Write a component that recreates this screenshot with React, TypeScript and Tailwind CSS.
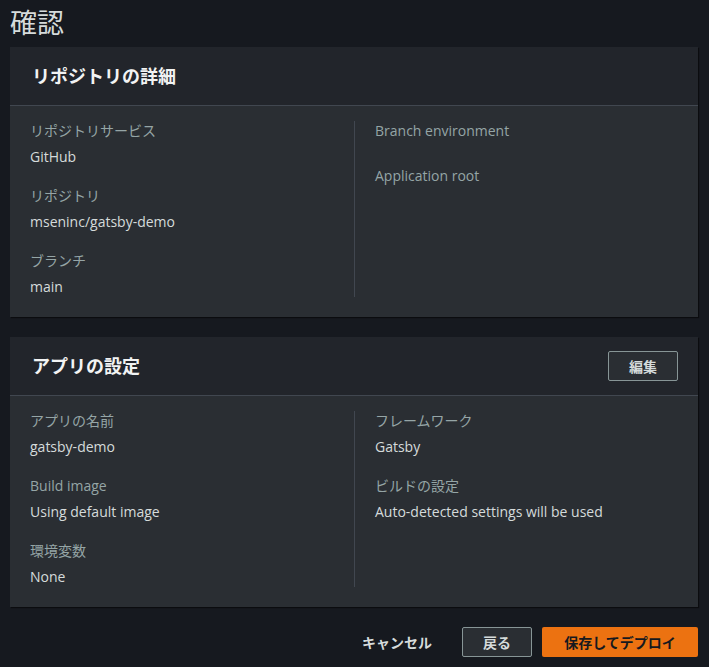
import React from "react";

const font = { fontFamily: '"Open Sans", "Noto Sans CJK JP", sans-serif' };

function Field({ label, value }: { label: string; value?: string }) {
  return (
    <div className="flex flex-col">
      <div className="text-[14px] leading-[20px] text-[#95a5a6]">{label}</div>
      <div className="mt-[6px] h-[20px] text-[14px] leading-[20px] text-[#d5dbdb]">{value ?? ""}</div>
    </div>
  );
}

function Card({
  title,
  action,
  left,
  right,
}: {
  title: string;
  action?: React.ReactNode;
  left: React.ReactNode;
  right: React.ReactNode;
}) {
  return (
    <div className="bg-[#2a2e33] shadow-[1px_1px_1px_rgba(0,0,0,0.5)]">
      <div className="flex h-[59px] items-center justify-between border-b border-[#414750] bg-[#22252b] pl-[22px] pr-[20px]">
        <div className="text-[18px] font-bold text-[#f2f3f3]">{title}</div>
        {action}
      </div>
      <div className="flex px-[20px] pb-[20px] pt-[15px]">
        <div className="flex w-[325px] shrink-0 flex-col gap-[19px] border-r border-[#414750]">{left}</div>
        <div className="flex flex-1 flex-col gap-[19px] pl-[20px]">{right}</div>
      </div>
    </div>
  );
}

export default function App() {
  return (
    <div className="min-h-[667px] w-[709px] bg-[#16191f] pl-[10px] pr-[11px]" style={font}>
      <div className="flex h-[45px] items-center text-[27px] leading-none text-[#d5dbdb]">確認</div>
      <div className="h-[2px]" />
      <Card
        title="リポジトリの詳細"
        left={
          <>
            <Field label="リポジトリサービス" value="GitHub" />
            <Field label="リポジトリ" value="mseninc/gatsby-demo" />
            <Field label="ブランチ" value="main" />
          </>
        }
        right={
          <>
            <div className="text-[14px] leading-[20px] text-[#95a5a6]">Branch environment</div>
            <div className="mt-[6px] text-[14px] leading-[20px] text-[#95a5a6]">Application root</div>
          </>
        }
      />
      <div className="h-[20px]" />
      <Card
        title="アプリの設定"
        action={
          <button className="h-[30px] w-[70px] rounded-[2px] border border-[#879596] bg-[#2a2e33] text-[14px] font-bold text-[#d5dbdb]">
            編集
          </button>
        }
        left={
          <>
            <Field label="アプリの名前" value="gatsby-demo" />
            <Field label="Build image" value="Using default image" />
            <Field label="環境変数" value="None" />
          </>
        }
        right={
          <>
            <Field label="フレームワーク" value="Gatsby" />
            <Field label="ビルドの設定" value="Auto-detected settings will be used" />
          </>
        }
      />
      <div className="flex items-center justify-end gap-[10px] pt-[20px]">
        <button className="h-[30px] px-[20px] text-[14px] font-bold text-[#d5dbdb]">キャンセル</button>
        <button className="h-[30px] w-[70px] rounded-[2px] border border-[#879596] bg-[#2a2e33] text-[14px] font-bold text-[#d5dbdb]">
          戻る
        </button>
        <button className="h-[30px] w-[156px] rounded-[2px] bg-[#ec7211] text-[14px] font-bold text-[#16191f]">
          保存してデプロイ
        </button>
      </div>
    </div>
  );
}
